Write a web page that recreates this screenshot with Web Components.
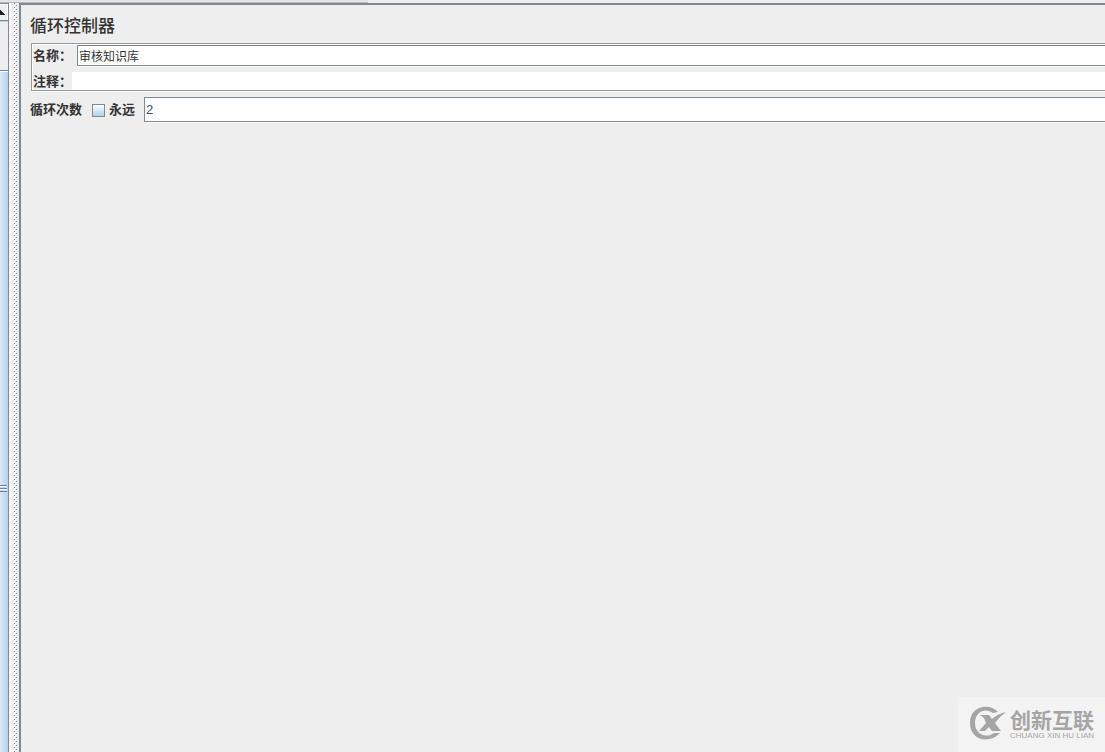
<!DOCTYPE html>
<html lang="zh-CN">
<head>
<meta charset="utf-8">
<title>循环控制器</title>
<style>
html, body { margin: 0; height: 100%; }
body { background: #eeeeee; color: #333333; overflow: hidden; font-family: "Liberation Sans", "Noto Sans CJK SC", sans-serif; }
</style>
</head>
<body>
<app-window>
  <tree-scrollbar slot="side"></tree-scrollbar>
  <split-divider slot="side"></split-divider>
  <controller-panel heading="循环控制器"></controller-panel>
  <brand-mark slot="brand"></brand-mark>
</app-window>
<script>
function define(name, html) {
  const template = document.createElement('template');
  template.innerHTML = html;
  customElements.define(name, class extends HTMLElement {
    constructor() {
      super();
      this.attachShadow({ mode: 'open' }).append(template.content.cloneNode(true));
    }
    connectedCallback() {
      for (const node of this.shadowRoot.querySelectorAll('[data-from]')) {
        node.textContent = this.getAttribute(node.dataset.from);
      }
    }
  });
}

define('app-window', `
<style>
:host { display: flex; flex-direction: column; height: 100vh; position: relative; overflow: hidden; }
.strip { height: 3px; flex: none; background: #eeeeee; }
.strip div { width: 33.3%; height: 3px; box-sizing: border-box; background: #e4e4e4; border-bottom: 1px solid #b8b8b8; }
.body { display: flex; flex: 1; min-height: 0; }
main { flex: 1; min-width: 0; border-top: 2px solid #7a8a99; border-left: 2px solid #7a8a99; }
.brand { position: absolute; right: 0; bottom: 0; }
</style>
<div class="strip"><div></div></div>
<div class="body"><slot name="side"></slot><main><slot></slot></main></div>
<div class="brand"><slot name="brand"></slot></div>`);

define('tree-scrollbar', `
<style>
:host { display: flex; flex-direction: column; flex: none; width: 8px; border-right: 1px solid #7a8a99; border-top: 1px solid #7a8a99; }
button { display: block; flex: none; height: 17px; width: 100%; padding: 0; border: 0; border-bottom: 1px solid #7a8a99; background: #eeeeee; box-shadow: inset 0 1px #ffffff, inset -1px 0 #ffffff, 0 1px #b8cfe5; }
svg { display: block; }
.track { height: 49px; flex: none; }
.thumb { flex: 1; border-top: 1px solid #6382bf; background: linear-gradient(90deg, #dce9f4, #b8cfe5); box-shadow: inset 0 1px #ffffff; display: grid; grid-template-rows: 414fr auto 260fr; }
.grip { grid-row: 2; width: 7px; height: 7px; background: repeating-linear-gradient(#6382bf 0 1px, #ffffff 1px 2px, #c8daea 2px 3px); }
</style>
<button aria-label="向上滚动"><svg width="8" height="16" viewBox="0 0 8 16" shape-rendering="crispEdges"><path d="M0 6h1v1h1v1h1v1h1v1h1v1H0z" fill="#222"/></svg></button>
<div class="track"></div>
<div class="thumb"><div class="grip"></div></div>`);

define('split-divider', `
<style>
:host { display: block; flex: none; width: 10px; background: linear-gradient(90deg, #ffffff 2px, #eeeeee 2px); }
svg { display: block; width: 10px; height: 100%; }
</style>
<svg aria-hidden="true" shape-rendering="crispEdges"><defs><pattern id="dots" width="10" height="4" patternUnits="userSpaceOnUse">
<path d="M4 3h1v1h-1zM6 1h1v1h-1z" fill="#ffffff"/><path d="M5 0h1v1h-1zM7 2h1v1h-1z" fill="#7a8a99"/></pattern></defs>
<rect width="10" height="100%" fill="url(#dots)"/></svg>`);

define('controller-panel', `
<style>
:host { display: block; padding: 9px 0 0 9px; }
h1 { margin: 0; font-size: 17px; line-height: 26px; font-weight: 500; }
.group { margin: 3px 0 0 1px; border: 1px solid #999999; border-right: 0; box-shadow: inset 1px 1px #ffffff, 0 1px #ffffff; padding: 1px 0 0 1px; }
.row { display: flex; align-items: center; }
.note { margin-top: 6px; height: 18px; }
label { font-size: 13px; line-height: 18px; font-weight: 700; white-space: nowrap; flex: none; padding-top: 1px; }
input { font: 12px/16px "Liberation Sans", "Noto Sans CJK SC", sans-serif; color: #333333; min-width: 0; flex: 1; box-sizing: border-box; border: 1px solid #7a8a99; border-right: 0; border-radius: 0; background: #ffffff; outline: 0; margin: 0; padding: 0 1px; height: 21px; }
.name input { margin-left: 5px; box-shadow: 0 1px #ffffff; }
.note input { height: 18px; border: 0; }
.loops { margin-top: 6px; height: 25px; }
.loops .count { height: 25px; margin-left: 9px; font-size: 13px; color: #34516b; box-shadow: 0 1px #ffffff; }
.loops input[type=checkbox] { appearance: none; flex: none; width: 13px; height: 13px; padding: 0; margin: 1px 4px 0 10px; border: 1px solid #7a8a99; background: linear-gradient(#ffffff, #dce9f4 45%, #b8cfe5); }
</style>
<h1 data-from="heading"></h1>
<div class="group">
  <div class="row name"><label for="name">名称：</label><input id="name" type="text" value="审核知识库"></div>
  <div class="row note"><label for="note">注释：</label><input id="note" type="text"></div>
</div>
<div class="row loops"><label for="count">循环次数</label><input id="forever" type="checkbox"><label for="forever">永远</label><input id="count" class="count" type="text" value="2"></div>`);

define('brand-mark', `
<style>
:host { display: flex; align-items: center; gap: 4px; box-sizing: border-box; width: 147px; height: 55px; padding: 0 8px 3px 12px; background: #f3f3f3; color: #a5a5a5; }
svg { flex: none; }
.words { display: flex; flex-direction: column; white-space: nowrap; padding-top: 3px; }
.cn { font-size: 21px; line-height: 22px; font-weight: 700; }
.en { font-size: 8px; line-height: 8px; }
</style>
<svg width="36" height="34" viewBox="0 0 36 34" aria-hidden="true" fill="#a5a5a5"><path d="M28 6C20-3 0-1 0 17C0 35 20 38 30 27H24C16 33 5 28 5 17C5 6 15 1 23 7Z"/><path d="M10 9H19L22 13Q27 8 36 6Q29 11 25 17L31 25H22L19 21L15 25H9L16 17L14 12Z"/></svg>
<div class="words"><span class="cn">创新互联</span><span class="en">CHUANG XIN HU LIAN</span></div>`);
</script>
</body>
</html>
